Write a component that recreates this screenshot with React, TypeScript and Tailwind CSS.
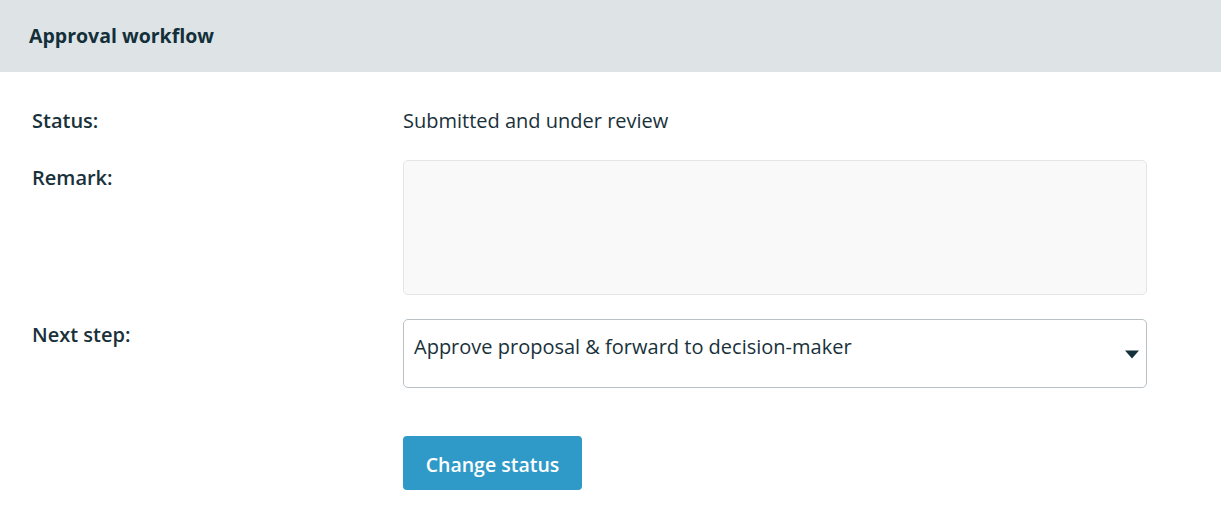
import React, { useState } from 'react';

const font = { fontFamily: '"Open Sans", "Noto Sans", sans-serif' };

export default function App() {
  const [remark, setRemark] = useState('');
  const [step, setStep] = useState('approve');

  return (
    <div className="w-[1221px] h-[521px] bg-white text-[#19313a]" style={font}>
      <div className="h-[72px] bg-[#dee3e6] flex items-center px-[29px]">
        <h3 className="text-[19.5px] font-bold text-[#13303a]">Approval workflow</h3>
      </div>

      <div className="grid grid-cols-[371px_744px] pl-[32px] pt-[35px]">
        <div className="text-[20px] font-semibold leading-[28px]">Status:</div>
        <div className="text-[20px] leading-[28px]">Submitted and under review</div>

        <div className="text-[20px] font-semibold leading-[28px] mt-[29px]">Remark:</div>
        <textarea
          value={remark}
          onChange={(event) => setRemark(event.target.value)}
          className="mt-[25px] h-[135px] w-full resize-none rounded-[5px] border border-[#e3e6e8] bg-[#f9f9f9] p-3 text-[20px] outline-none"
        />

        <div className="text-[20px] font-semibold leading-[28px] mt-[26px]">Next step:</div>
        <div className="relative mt-[24px] h-[69px] rounded-[5px] border border-[#b8c1c5]">
          <select
            value={step}
            onChange={(event) => setStep(event.target.value)}
            className="h-full w-full appearance-none bg-transparent pl-[10px] pr-10 pb-[14px] text-[20px] text-[#19313a] outline-none"
          >
            <option value="approve">Approve proposal &amp; forward to decision-maker</option>
            <option value="reject">Reject proposal</option>
          </select>
          <svg
            className="pointer-events-none absolute right-[7px] top-[30px]"
            width="14"
            height="9"
            viewBox="0 0 14 9"
          >
            <path d="M0 0.5 H14 L7 8.5 Z" fill="#143038" />
          </svg>
        </div>

        <div />
        <div className="mt-[48px]">
          <button className="h-[54px] w-[179px] rounded-[4px] bg-[#2f9ac7] pt-[3px] text-[19.5px] font-semibold text-white">
            Change status
          </button>
        </div>
      </div>
    </div>
  );
}
